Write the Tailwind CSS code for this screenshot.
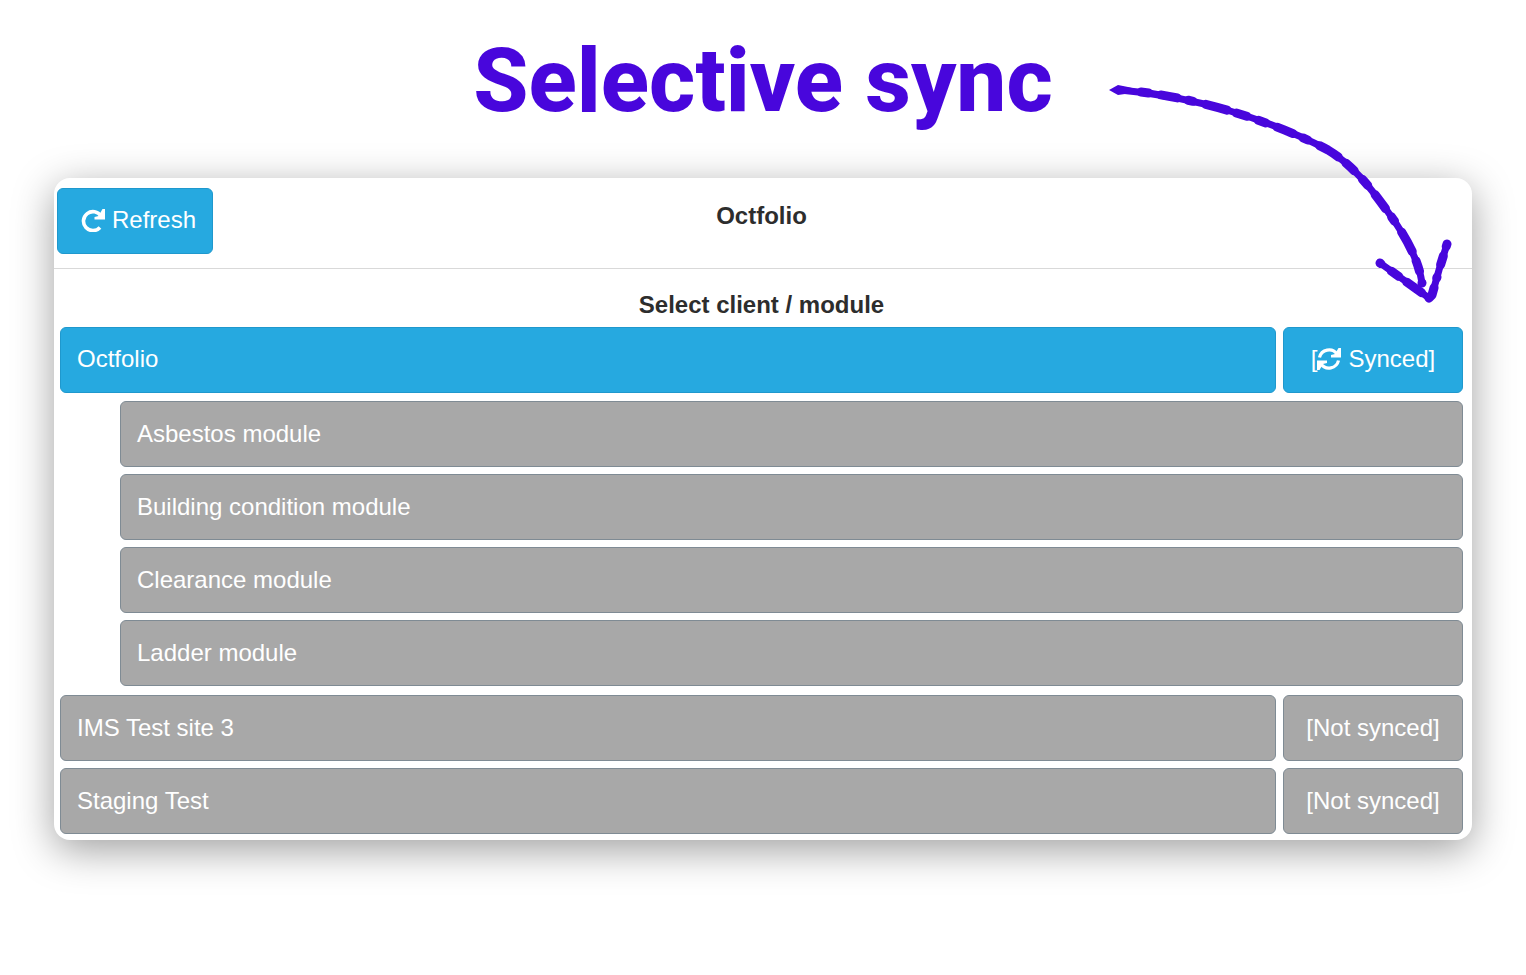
<!DOCTYPE html>
<html lang="en">
	<head>
		<meta charset="utf-8">
		<meta name="viewport" content="width=device-width, initial-scale=1">
		<title>Octfolio - Selective sync</title>
		<script src="https://cdn.jsdelivr.net/npm/@tailwindcss/browser@4"></script>
	</head>
	<body class="relative min-h-screen bg-white font-['Liberation_Sans',Arial,sans-serif] text-2xl text-white">
		<h1 class="pt-[37px] text-center font-['Roboto',sans-serif] text-[89px] leading-[88px] font-extrabold text-[#4806dc]">Selective sync</h1>

		<main class="mx-[54px] mt-[53px] rounded-2xl bg-white pb-[6px] shadow-[0_10px_40px_rgba(0,0,0,0.38)]">
			<header class="grid grid-cols-[1fr_auto_1fr] items-start border-b border-[#d9d9d9] pt-[10px] pr-[6px] pb-[14px] pl-[3px] text-[#2d2d2d]">
				<button type="button" class="flex h-[66px] items-center gap-[7px] justify-self-start rounded-md border border-[#1f98cd] bg-[#26a9e0] pr-4 pb-[2px] pl-[23px] text-white">
					<svg class="size-6" viewBox="0 0 24 24" fill="none" aria-hidden="true">
						<path d="M20 8A9.500 9.500 0 1 0 19 19.500" stroke="currentColor" stroke-width="3.600" />
						<path d="M21.500 1H24v10.500H13.500V9l4-1z" fill="currentColor" />
					</svg>
					Refresh
				</button>
				<h2 class="pt-3 leading-8 font-bold">Octfolio</h2>
			</header>

			<section class="pr-[9px] pl-[6px]">
				<h3 class="pt-5 pb-[6px] text-center leading-8 font-bold text-[#2d2d2d]">Select client / module</h3>

				<div class="flex gap-[7px]">
					<button type="button" class="h-[66px] flex-1 rounded-md border border-[#1f98cd] bg-[#26a9e0] px-4 pb-[2px] text-left">Octfolio</button>
					<button type="button" class="flex h-[66px] w-[180px] items-center justify-center rounded-md border border-[#1f98cd] bg-[#26a9e0] pb-[2px]">
						[<svg class="mr-[7px] size-6" viewBox="0 0 24 24" fill="none" aria-hidden="true">
							<path d="M2.500 10.500A9.800 9.800 0 0 1 20 7M21.500 13.500A9.800 9.800 0 0 1 4 17" stroke="currentColor" stroke-width="3.200" />
							<path d="M21.500 1H24v9.500H14V8l4-1zM2.500 23H0v-9.500h10V16l-4 1z" fill="currentColor" />
						</svg>
						Synced]
					</button>
				</div>

				<ul class="mt-2 mb-[9px] ml-[60px] flex flex-col gap-[7px]">
					<li><button type="button" class="h-[66px] w-full rounded-md border border-[#7f8b94] bg-[#a8a8a8] px-4 text-left">Asbestos module</button></li>
					<li><button type="button" class="h-[66px] w-full rounded-md border border-[#7f8b94] bg-[#a8a8a8] px-4 text-left">Building condition module</button></li>
					<li><button type="button" class="h-[66px] w-full rounded-md border border-[#7f8b94] bg-[#a8a8a8] px-4 text-left">Clearance module</button></li>
					<li><button type="button" class="h-[66px] w-full rounded-md border border-[#7f8b94] bg-[#a8a8a8] px-4 text-left">Ladder module</button></li>
				</ul>

				<div class="flex flex-col gap-[7px]">
					<div class="flex gap-[7px]">
						<button type="button" class="h-[66px] flex-1 rounded-md border border-[#7f8b94] bg-[#a8a8a8] px-4 text-left">IMS Test site 3</button>
						<button type="button" class="h-[66px] w-[180px] rounded-md border border-[#7f8b94] bg-[#a8a8a8]">[Not synced]</button>
					</div>
					<div class="flex gap-[7px]">
						<button type="button" class="h-[66px] flex-1 rounded-md border border-[#7f8b94] bg-[#a8a8a8] px-4 text-left">Staging Test</button>
						<button type="button" class="h-[66px] w-[180px] rounded-md border border-[#7f8b94] bg-[#a8a8a8]">[Not synced]</button>
					</div>
				</div>
			</section>
		</main>

		<!-- hand-drawn arrow pointing at the sync button -->
		<svg class="pointer-events-none absolute top-20 right-[70px] h-[226px] w-[350px]" viewBox="0 0 350 226" fill="none" stroke="#4806dc" stroke-linecap="round" stroke-linejoin="round" aria-hidden="true">
			<path d="M3 10L12 5L22 7L26 8L26 13L12 15z" fill="#4806dc" stroke="none" />
			<path d="M14 10C50 13 90 21 124 31S192 54 222 70C250 87 268 113 282 132S312 176 316 203" stroke-width="7" />
			<path d="M35 12C60 15 94 22 124 31S192 54 222 70C250 87 268 113 282 132S312 176 316 203" stroke-width="9" stroke-dasharray="8 12 17 11 5 13 22 10 11 12" />
			<path d="M274 183L323 218L326 215L333 190L341 164" stroke-width="7" />
			<path d="M274 183L323 218L326 215L333 190L341 164" stroke-width="9" stroke-dasharray="1 13 9 10 18 9 12 10" />
		</svg>
	</body>
</html>
